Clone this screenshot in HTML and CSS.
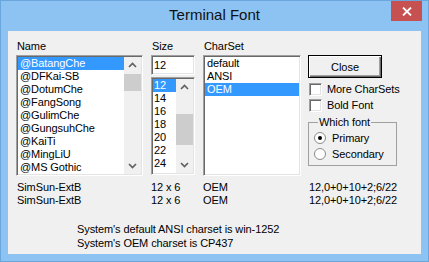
FILE: index.html
```html
<!DOCTYPE html>
<html lang="en">
<head>
  <meta charset="UTF-8">
  <title>Terminal Font</title>
  <link rel="stylesheet" href="styles.css">
</head>
<body>
  <div class="window">
    <div class="titlebar">
      <span></span>
      <div class="title">Terminal Font</div>
      <button class="close-x" aria-label="Close">
        <svg width="10" height="9" viewBox="0 0 10 9"><path d="M1 0.5 L9 8.5 M9 0.5 L1 8.5" stroke="#fff" stroke-width="1.8"/></svg>
      </button>
    </div>

    <div class="client">
      <div class="top">
        <div class="col col-name">
          <div class="label">Name</div>
          <div class="listbox sunken name-list">
            <ul class="items">
              <li class="sel">@BatangChe</li>
              <li>@DFKai-SB</li>
              <li>@DotumChe</li>
              <li>@FangSong</li>
              <li>@GulimChe</li>
              <li>@GungsuhChe</li>
              <li>@KaiTi</li>
              <li>@MingLiU</li>
              <li>@MS Gothic</li>
            </ul>
            <div class="vscroll">
              <div class="arrow"><svg width="17" height="17" viewBox="0 0 17 17"><path d="M5 10 L8.5 6.5 L12 10" fill="none" stroke="#606060" stroke-width="1.7"/></svg></div>
              <div class="track"><div class="thumb name-thumb"></div></div>
              <div class="arrow"><svg width="17" height="17" viewBox="0 0 17 17"><path d="M5 7 L8.5 10.5 L12 7" fill="none" stroke="#606060" stroke-width="1.7"/></svg></div>
            </div>
          </div>
        </div>

        <div class="col col-size">
          <div class="label">Size</div>
          <div class="edit sunken">12</div>
          <div class="listbox sunken size-list">
            <ul class="items">
              <li class="sel">12</li>
              <li>14</li>
              <li>16</li>
              <li>18</li>
              <li>20</li>
              <li>22</li>
              <li>24</li>
            </ul>
            <div class="vscroll">
              <div class="arrow"><svg width="17" height="17" viewBox="0 0 17 17"><path d="M5 10 L8.5 6.5 L12 10" fill="none" stroke="#606060" stroke-width="1.7"/></svg></div>
              <div class="track"><div class="thumb size-thumb"></div></div>
              <div class="arrow"><svg width="17" height="17" viewBox="0 0 17 17"><path d="M5 7 L8.5 10.5 L12 7" fill="none" stroke="#606060" stroke-width="1.7"/></svg></div>
            </div>
          </div>
        </div>

        <div class="col col-charset">
          <div class="label">CharSet</div>
          <div class="listbox sunken charset-list">
            <ul class="items">
              <li>default</li>
              <li>ANSI</li>
              <li class="sel">OEM</li>
            </ul>
          </div>
        </div>

        <div class="col col-options">
          <button class="btn-default">Close</button>
          <label class="check"><span class="box sunken"></span>More CharSets</label>
          <label class="check"><span class="box sunken"></span>Bold Font</label>
          <fieldset class="group">
            <legend>Which font</legend>
            <div class="radio">
              <svg width="12" height="12" viewBox="0 0 12 12"><circle cx="6" cy="6" r="5.5" fill="#fff" stroke="#8a8a8a"/><circle cx="6" cy="6" r="2" fill="#000"/></svg>
              Primary
            </div>
            <div class="radio">
              <svg width="12" height="12" viewBox="0 0 12 12"><circle cx="6" cy="6" r="5.5" fill="#fff" stroke="#8a8a8a"/></svg>
              Secondary
            </div>
          </fieldset>
        </div>
      </div>

      <div class="status">
        <span>SimSun-ExtB</span><span>12 x 6</span><span>OEM</span><span>12,0+0+10+2;6/22</span>
        <span>SimSun-ExtB</span><span>12 x 6</span><span>OEM</span><span>12,0+0+10+2;6/22</span>
      </div>

      <div class="sysinfo">
        <div>System's default ANSI charset is win-1252</div>
        <div>System's OEM charset is CP437</div>
      </div>
    </div>
  </div>
</body>
</html>
```

FILE: styles.css
```css
* {
  box-sizing: border-box;
}

body {
  margin: 0;
  font-family: 'Liberation Sans', Arial, sans-serif;
  font-size: 11px;
  color: #000;
}

.window {
  width: 429px;
  height: 262px;
  background: #8cc3f3;
  border: 1px solid #6aa6dc;
  display: flex;
  flex-direction: column;
}

.titlebar {
  height: 30px;
  display: grid;
  grid-template-columns: 1fr auto 1fr;
}

.title {
  font-size: 15px;
  line-height: 28px;
  color: #111;
}

.close-x {
  justify-self: end;
  align-self: start;
  width: 31px;
  height: 20px;
  margin-right: 6px;
  border: none;
  padding: 0;
  background: #c75050;
  display: flex;
  align-items: center;
  justify-content: center;
}

.client {
  margin: 0 7px;
  height: 223px;
  background: #f0f0f0;
  padding: 9px 0 0 8px;
  letter-spacing: -0.1px;
}

.top {
  display: flex;
  align-items: flex-start;
}

.label {
  height: 13px;
  line-height: 13px;
  margin-bottom: 2px;
  padding-left: 1px;
}

.sunken {
  border: 1px solid;
  border-color: #a0a0a0 #fff #fff #a0a0a0;
  box-shadow: inset 1px 1px #696969, inset -1px -1px #e3e3e3;
  background: #fff;
  padding: 1px;
}

.col-name {
  width: 127px;
}

.col-size {
  width: 44px;
  margin-left: 8px;
}

.col-charset {
  width: 98px;
  margin-left: 8px;
}

.col-options {
  width: 89px;
  margin-left: 7px;
  padding-top: 15px;
}

.listbox {
  display: flex;
  overflow: hidden;
}

.name-list,
.charset-list {
  height: 121px;
}

.size-list {
  height: 98px;
  margin-top: 2px;
}

.items {
  list-style: none;
  margin: 0;
  padding: 0;
  flex: 1;
  overflow: hidden;
}

.items li {
  height: 13px;
  line-height: 13px;
  padding-left: 2px;
  white-space: nowrap;
}

.size-list .items li {
  padding-left: 1px;
}

.items li.sel {
  background: #3399ff;
  color: #fff;
}

.vscroll {
  width: 17px;
  display: flex;
  flex-direction: column;
  background: #f0f0f0;
}

.arrow {
  height: 17px;
}

.arrow svg {
  display: block;
}

.track {
  flex: 1;
}

.thumb {
  background: #cdcdcd;
}

.name-thumb {
  height: 17px;
}

.size-thumb {
  margin-top: 18px;
  height: 31px;
}

.edit {
  height: 20px;
  line-height: 16px;
  padding-left: 2px;
}

.btn-default {
  display: block;
  width: 74px;
  height: 23px;
  font: inherit;
  color: #000;
  background: #f0f0f0;
  border: 1px solid #000;
  box-shadow: inset 1px 1px #fff, inset -1px -1px #696969, inset -2px -2px #a0a0a0;
  padding: 0;
}

.check {
  display: flex;
  align-items: center;
  height: 16px;
  margin-top: 3px;
  padding-left: 1px;
  white-space: nowrap;
}

.check + .check {
  margin-top: 0;
}

.box {
  flex: none;
  width: 13px;
  height: 13px;
  margin-right: 5px;
}

.group {
  margin: 3px 0 0 0;
  padding: 0 0 3px 5px;
  border: 1px solid #a0a0a0;
  width: 89px;
}

.group legend {
  padding: 0 1px;
  margin-left: 4px;
  line-height: 13px;
}

.radio {
  display: flex;
  align-items: center;
  gap: 6px;
  height: 16px;
  white-space: nowrap;
}

.radio:first-of-type {
  margin-top: 1px;
}

.status {
  display: grid;
  grid-template-columns: 134px 52px 106px auto;
  grid-auto-rows: 13px;
  line-height: 13px;
  margin: 5px 0 0 1px;
}

.sysinfo {
  margin-top: 15px;
  padding-left: 61px;
  line-height: 14px;
}
```
